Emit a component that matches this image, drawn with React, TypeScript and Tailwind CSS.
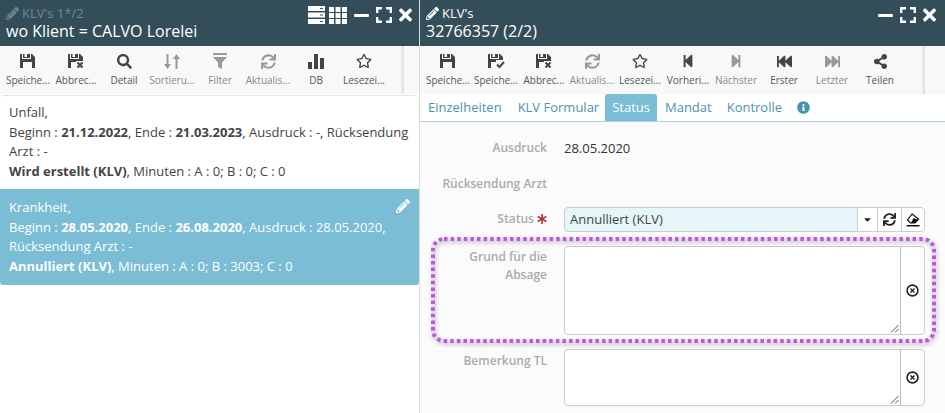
import React from "react";
import {
  FaPencilAlt, FaTimes, FaMinus, FaSearch, FaSync, FaStepBackward, FaStepForward,
  FaFastBackward, FaFastForward, FaShareAlt, FaInfoCircle, FaCaretDown, FaRegStar, FaAsterisk,
} from "react-icons/fa";

const Floppy = ({ badge }: { badge?: "x" | "check" }) => (
  <svg width="18" height="16" viewBox="0 0 18 16" fill="currentColor">
    <path fillRule="evenodd" d="M1 1h2v5h9V1h1l3 3v11H1zM4 1h1.500v3h2.500V1h3v4H4zM4 9h9v6H4z" />
    {badge === "x" && (
      <g>
        <rect x="9" y="8" width="9" height="8" fill="#f8f8f8" />
        <path d="M10.500 9.500l5 5M15.500 9.500l-5 5" stroke="currentColor" strokeWidth="2" fill="none" />
      </g>
    )}
    {badge === "check" && (
      <g>
        <rect x="9" y="7" width="9" height="9" fill="#f8f8f8" />
        <path d="M10 11.500l2.500 2.500 4.500-5" stroke="currentColor" strokeWidth="2" fill="none" />
      </g>
    )}
  </svg>
);

const SortIcon = () => (
  <svg width="18" height="17" viewBox="0 0 18 17" fill="currentColor">
    <path d="M3.500 1h2v10H8l-3.500 5L1 11h2.500zM12.500 16h2V6H17l-3.500-5L10 6h2.500z" />
  </svg>
);

const Bars = () => (
  <svg width="16" height="16" viewBox="0 0 16 16" fill="currentColor">
    <rect x="0" y="9" width="4" height="7" />
    <rect x="6" y="1" width="4" height="15" />
    <rect x="12" y="5" width="4" height="11" />
  </svg>
);

const FilterBar = () => (
  <svg width="14" height="16" viewBox="0 0 14 16" fill="currentColor">
    <rect x="0" y="0" width="14" height="2" />
    <path d="M0 4h14l-5 5.500V16l-4-2V9.500z" />
  </svg>
);

const ExpandIcon = () => (
  <svg width="16" height="16" viewBox="0 0 16 16" fill="none" stroke="white" strokeWidth="2.400">
    <path d="M1.200 6V1.200H6M10 1.200h4.800V6M14.800 10v4.800H10M6 14.800H1.200V10" />
  </svg>
);

const ListIcon = () => (
  <svg width="19" height="18" viewBox="0 0 19 18" fill="white">
    <path fillRule="evenodd" d="M1 0h17v5H1zM13 2v1h3V2z" />
    <path fillRule="evenodd" d="M1 6.500h17v5H1zM13 8.500v1h3v-1z" />
    <path fillRule="evenodd" d="M1 13h17v5H1zM13 15v1h3v-1z" />
  </svg>
);

const GridIcon = () => (
  <svg width="18" height="17" viewBox="0 0 18 17" fill="white">
    {[0, 6, 12].map((y) =>
      [0, 6.500, 13].map((x) => <rect key={`${x}-${y}`} x={x} y={y} width="5" height="5" />)
    )}
  </svg>
);

const ClearIcon = () => (
  <svg width="13" height="13" viewBox="0 0 13 13" fill="none" stroke="#222">
    <circle cx="6.500" cy="6.500" r="5.400" strokeWidth="1.600" />
    <path d="M4.500 4.500l4 4M8.500 4.500l-4 4" strokeWidth="1.400" />
  </svg>
);

const EraseIcon = () => (
  <svg width="14" height="14" viewBox="0 0 14 14">
    <path d="M6 1l6.500 5-3.500 4H4.500L1.500 7z" fill="#fff" stroke="#111" strokeWidth="1.200" />
    <path d="M7.500 5l5 2-3.500 3H5z" fill="#111" />
    <rect x="0.500" y="12" width="13" height="1.500" fill="#111" />
  </svg>
);

const Resize = () => (
  <svg width="9" height="9" viewBox="0 0 9 9" stroke="#555" className="absolute bottom-[1px] right-[1px]">
    <path d="M1 8.500L8.500 1M5 8.500L8.500 5" />
  </svg>
);

type Tool = { icon: React.ReactNode; label: string; off?: boolean };

const Toolbar = ({ tools, width }: { tools: Tool[]; width: string }) => (
  <div className="flex h-[48px] bg-[#f8f8f8]">
    <div className={`flex pl-[4px] ${width}`}>
      {tools.map((t, i) => (
        <div
          key={i}
          className={`flex w-[48px] shrink-0 flex-col items-center pt-[6px] ${t.off ? "text-[#999]" : "text-[#444]"}`}
        >
          <div className="flex h-[18px] items-center justify-center">{t.icon}</div>
          <div className={`mt-[4px] whitespace-nowrap text-[10px] leading-[13px] ${t.off ? "text-[#888]" : "text-[#555]"}`}>
            {t.label}
          </div>
        </div>
      ))}
    </div>
    <div className="w-[4px] bg-gradient-to-r from-[#f8f8f8] to-[#dddddd]" />
  </div>
);

const Header = ({
  sub,
  title,
  dim,
  extra,
  pad,
}: {
  sub: string;
  title: string;
  dim?: boolean;
  extra?: React.ReactNode;
  pad: string;
}) => (
  <div className={`flex h-[46px] justify-between bg-[#344e59] pl-[6px] pt-[5px] ${pad}`}>
    <div>
      <div className={`flex h-[17px] items-center gap-[3px] text-[13px] ${dim ? "text-[#6f8791]" : "text-white"}`}>
        <FaPencilAlt size={13} />
        <span>{sub}</span>
      </div>
      <div className="text-[16px] leading-[18px] text-white">{title}</div>
    </div>
    <div className="flex h-[20px] items-center gap-[7px] text-white">
      {extra}
      <FaMinus className="h-[17px] w-[15px]" />
      <ExpandIcon />
      <FaTimes className="h-[20px] w-[13px]" />
    </div>
  </div>
);

const FormRow = ({ label, h, children, mb }: { label: React.ReactNode; h: string; children?: React.ReactNode; mb: string }) => (
  <div className={`flex ${h} ${mb}`}>
    <div className="w-[127px] shrink-0 text-right text-[12px] font-semibold leading-[18px] text-[#aaa]">{label}</div>
    <div className="ml-[17px] min-w-0 flex-1">{children}</div>
  </div>
);

const TextBox = ({ h }: { h: string }) => (
  <div className={`flex ${h} w-[361px] rounded-[4px] border border-[#ccc] bg-white`}>
    <div className="relative flex-1 rounded-l-[4px]">
      <Resize />
    </div>
    <div className="flex w-[24px] items-center justify-center border-l border-[#bbb] pr-[1px]">
      <ClearIcon />
    </div>
  </div>
);

const leftTools: Tool[] = [
  { icon: <Floppy />, label: "Speiche..." },
  { icon: <Floppy badge="x" />, label: "Abbrec..." },
  { icon: <FaSearch size={15} />, label: "Detail" },
  { icon: <SortIcon />, label: "Sortieru...", off: true },
  { icon: <FilterBar />, label: "Filter", off: true },
  { icon: <FaSync size={15} />, label: "Aktualis...", off: true },
  { icon: <Bars />, label: "DB" },
  { icon: <FaRegStar size={16} />, label: "Lesezei..." },
];

const rightTools: Tool[] = [
  { icon: <Floppy />, label: "Speiche..." },
  { icon: <Floppy badge="check" />, label: "Speiche..." },
  { icon: <Floppy badge="x" />, label: "Abbrec..." },
  { icon: <FaSync size={15} />, label: "Aktualis...", off: true },
  { icon: <FaRegStar size={16} />, label: "Lesezei..." },
  { icon: <FaStepBackward size={14} />, label: "Vorheri..." },
  { icon: <FaStepForward size={14} />, label: "Nächster", off: true },
  { icon: <FaFastBackward size={15} />, label: "Erster" },
  { icon: <FaFastForward size={15} />, label: "Letzter", off: true },
  { icon: <FaShareAlt size={15} />, label: "Teilen" },
];

export default function App() {
  return (
    <div
      className="relative flex h-[413px] w-[945px] overflow-hidden bg-white text-[#333]"
      style={{ fontFamily: '"Open Sans", sans-serif' }}
    >
      <div className="w-[419px] shrink-0">
        <Header
          sub="KLV's 1*/2"
          title="wo Klient = CALVO Lorelei"
          dim
          pad="pr-[7px]"
          extra={
            <div className="flex items-center gap-[3px]">
              <ListIcon />
              <GridIcon />
            </div>
          }
        />
        <Toolbar tools={leftTools} width="w-[400px]" />
        <div className="mx-[1px] mt-[1px] h-[94px] rounded-t-[3px] border-t border-[#e5e5e5] bg-white px-[8px] pt-[7px] text-[13px] leading-[19.600px] text-[#444]">
          <div>Unfall,</div>
          <div>
            Beginn : <b>21.12.2022</b>, Ende : <b>21.03.2023</b>, Ausdruck : -, Rücksendung
            <br />
            Arzt : -
          </div>
          <div>
            <b>Wird erstellt (KLV)</b>, Minuten : A : 0; B : 0; C : 0
          </div>
        </div>
        <div className="relative h-[96px] rounded-b-[3px] bg-[#7abdd5] px-[9px] pt-[9px] text-[13px] leading-[19.600px] text-white">
          <div>Krankheit,</div>
          <div>
            Beginn : <b>28.05.2020</b>, Ende : <b>26.08.2020</b>, Ausdruck : 28.05.2020,
            <br />
            Rücksendung Arzt : -
          </div>
          <div>
            <b>Annulliert (KLV)</b>, Minuten : A : 0; B : 3003; C : 0
          </div>
          <FaPencilAlt size={14} className="absolute right-[9px] top-[10px] text-white" />
        </div>
      </div>
      <div className="w-[1px] shrink-0 bg-[#ddd]" />
      <div className="flex min-w-0 flex-1 flex-col">
        <Header sub="KLV's" title="32766357 (2/2)" pad="pr-[9px]" />
        <Toolbar tools={rightTools} width="w-[501px]" />
        <div className="flex h-[28px] border-b border-[#a9d3e2] bg-white pl-[1px] text-[13px] leading-[27px] text-[#4b93ad] shadow-[0_1px_2px_rgba(0,0,0,0.1)]">
          <span className="pl-[7px] pr-[8px]">Einzelheiten</span>
          <span className="pl-[8px] pr-[6px]">KLV Formular</span>
          <span className="h-[27px] rounded-t-[3px] bg-[#7abdd5] px-[7px] text-white">Status</span>
          <span className="pl-[8px] pr-[8px]">Mandat</span>
          <span className="pl-[7px]">Kontrolle</span>
          <span className="ml-[15px] flex items-center">
            <FaInfoCircle size={13} className="text-[#4b93ad]" />
          </span>
        </div>
        <div className="flex-1 bg-[#fbfbfb] pt-[17px]">
          <FormRow label="Ausdruck" h="h-[20px]" mb="mb-[16px]">
            <div className="text-[13px] leading-[18px] text-[#333]">28.05.2020</div>
          </FormRow>
          <FormRow label="Rücksendung Arzt" h="h-[20px]" mb="mb-[12px]" />
          <FormRow
            label={
              <span className="relative top-[3px]">
                Status <FaAsterisk size={10} className="inline align-[-1px] text-[#b5302a]" />
              </span>
            }
            h="h-[24px]"
            mb="mb-[15px]"
          >
            <div className="flex h-[25px] w-[361px] rounded-[4px] border border-[#ccc] bg-[#e6f5f8] text-[13px] leading-[23px] text-[#444]">
              <div className="flex-1 pl-[5px]">Annulliert (KLV)</div>
              <div className="flex w-[20px] items-center justify-center border-l border-[#ccc] bg-white">
                <FaCaretDown size={11} className="text-[#222]" />
              </div>
              <div className="flex w-[24px] items-center justify-center border-l border-[#ccc] bg-white">
                <FaSync size={13} className="text-[#222]" />
              </div>
              <div className="flex w-[23px] items-center justify-center rounded-r-[4px] border-l border-[#ccc] bg-white">
                <EraseIcon />
              </div>
            </div>
          </FormRow>
          <FormRow
            label={
              <div className="pt-[2px]">
                Grund für die
                <br />
                Absage
              </div>
            }
            h="h-[89px]"
            mb="mb-[14px]"
          >
            <TextBox h="h-[89px]" />
          </FormRow>
          <FormRow label={<div className="pt-[3px]">Bemerkung TL</div>} h="h-[57px]" mb="mb-0">
            <TextBox h="h-[57px]" />
          </FormRow>
        </div>
      </div>
      <svg
        width="945"
        height="413"
        className="pointer-events-none absolute left-0 top-0 drop-shadow-[1px_2px_2px_rgba(0,0,0,0.35)]"
        fill="none"
      >
        <rect x="433" y="239" width="501" height="102" rx="11" stroke="#c254e3" strokeWidth="4" strokeDasharray="3.500 3.100" />
      </svg>
    </div>
  );
}
